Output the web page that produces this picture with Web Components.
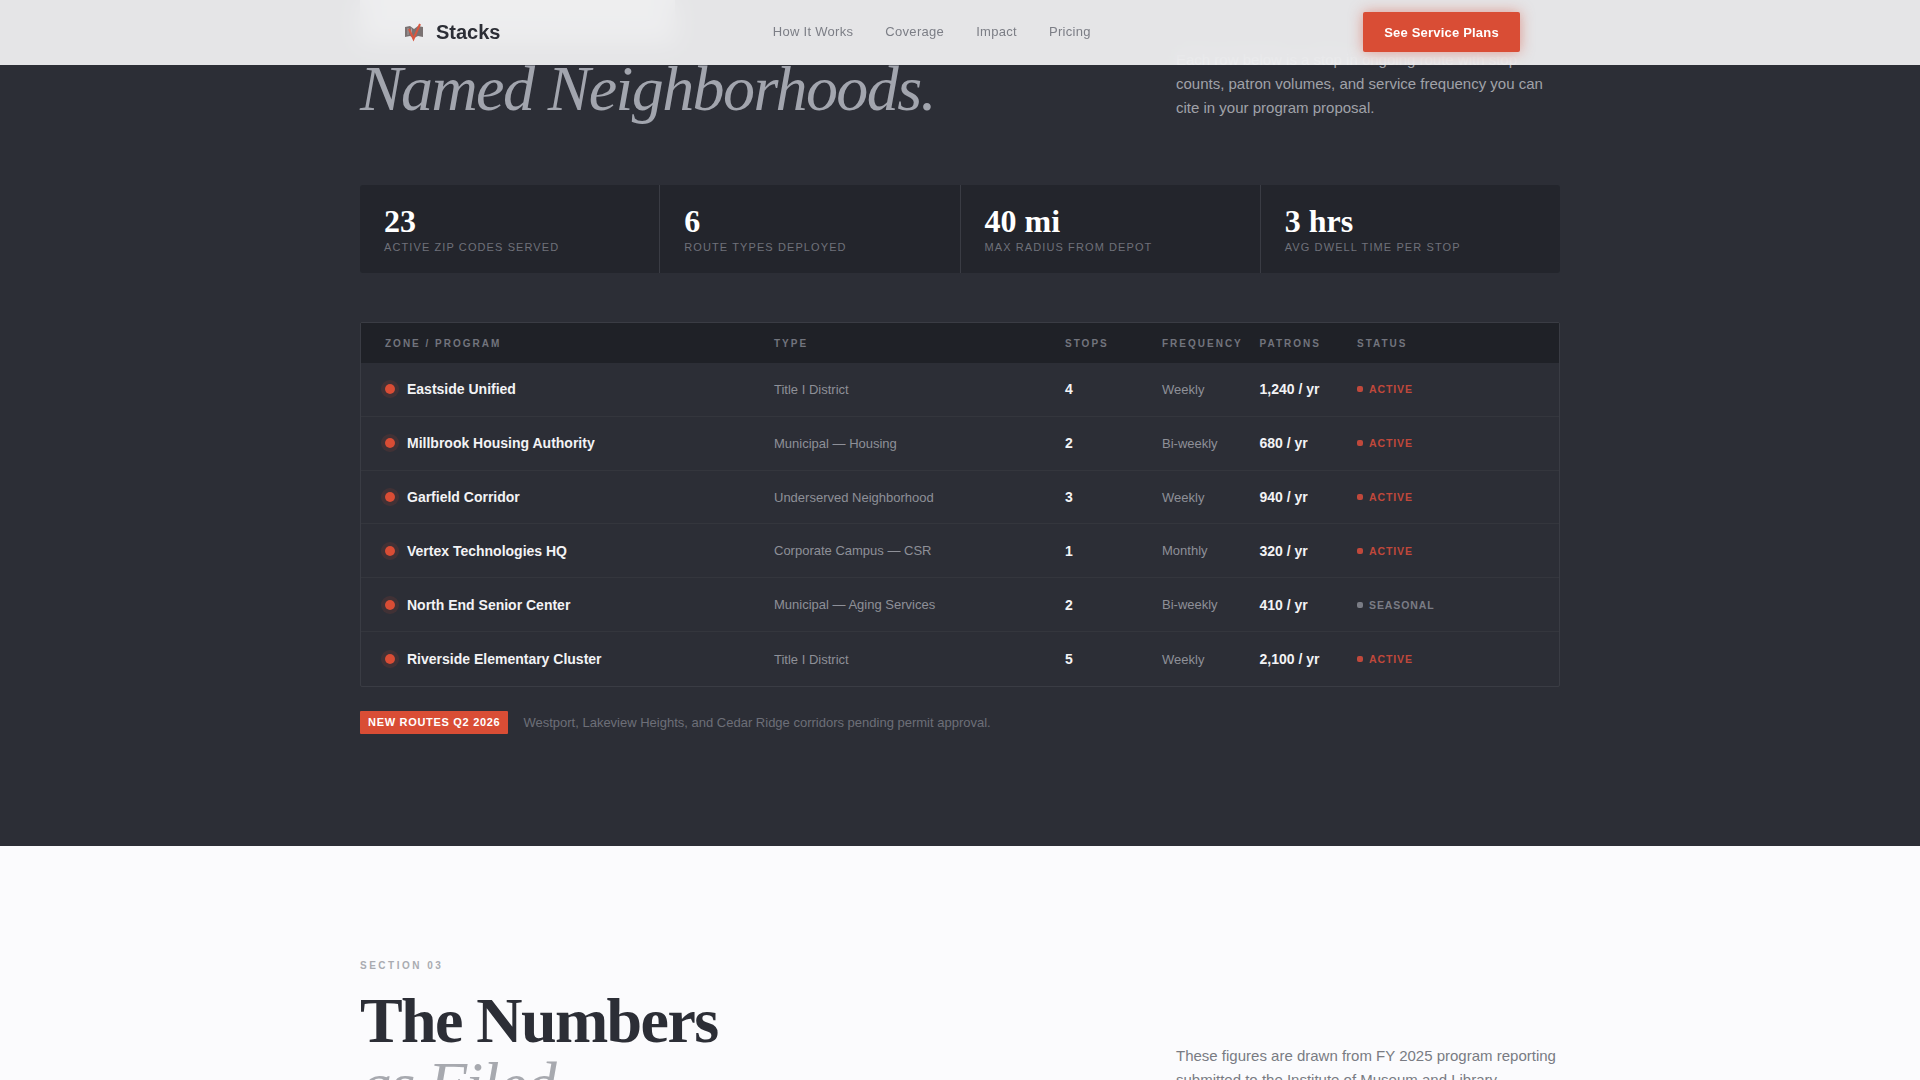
<!DOCTYPE html>
<html lang="en">
<head>
<meta charset="utf-8">
<title>Stacks</title>
<style>
  html, body { margin: 0; height: 1080px; overflow: hidden; background: #2c2e36; }
  body { font-family: "Liberation Sans", Arial, sans-serif; }
</style>
</head>
<body>
<site-nav></site-nav>

<page-section tone="dark" style="--shift: -16px; --bottom: 112px">
  <section-head tone="dark" style="--gap: 64px">
    <span slot="title" class="ghost"></span>
    <span slot="accent">Named Neighborhoods.</span>
    Each row below is a stop in ongoing route with stop counts, patron volumes, and service frequency you can cite in your program proposal.
  </section-head>

  <stat-strip>
    <stat-cell value="23" label="Active Zip Codes Served"></stat-cell>
    <stat-cell value="6" label="Route Types Deployed"></stat-cell>
    <stat-cell value="40 mi" label="Max Radius from Depot"></stat-cell>
    <stat-cell value="3 hrs" label="Avg Dwell Time per Stop"></stat-cell>
  </stat-strip>

  <zone-table>
    <zone-row name="Eastside Unified" type="Title I District" stops="4" freq="Weekly" patrons="1,240 / yr" status="Active"></zone-row>
    <zone-row name="Millbrook Housing Authority" type="Municipal — Housing" stops="2" freq="Bi-weekly" patrons="680 / yr" status="Active"></zone-row>
    <zone-row name="Garfield Corridor" type="Underserved Neighborhood" stops="3" freq="Weekly" patrons="940 / yr" status="Active"></zone-row>
    <zone-row name="Vertex Technologies HQ" type="Corporate Campus — CSR" stops="1" freq="Monthly" patrons="320 / yr" status="Active"></zone-row>
    <zone-row name="North End Senior Center" type="Municipal — Aging Services" stops="2" freq="Bi-weekly" patrons="410 / yr" status="Seasonal"></zone-row>
    <zone-row name="Riverside Elementary Cluster" type="Title I District" stops="5" freq="Weekly" patrons="2,100 / yr" status="Active"></zone-row>
  </zone-table>

  <route-note badge="New Routes Q2 2026">Westport, Lakeview Heights, and Cedar Ridge corridors pending permit approval.</route-note>
</page-section>

<page-section tone="light" style="--top: 114px; --bottom: 112px">
  <section-head tone="light" eyebrow="Section 03">
    <span slot="title">The Numbers</span>
    <span slot="accent">as Filed</span>
    These figures are drawn from FY 2025 program reporting submitted to the Institute of Museum and Library Services.
  </section-head>
</page-section>

<style>
  /* first heading line sits under the nav, only its glow comes through the blur */
  .ghost { display: block; width: 315px; height: 73.400px; background: linear-gradient(rgba(255,255,255,0.4), rgba(255,255,255,0.4)) 0 14px / 100% 45px no-repeat; }
</style>

<script>
class SiteNav extends HTMLElement {
  constructor() {
    super();
    this.attachShadow({ mode: 'open' });
    this.shadowRoot.innerHTML = `
      <style>
        :host {
          display: block;
          position: fixed;
          top: 0;
          left: 0;
          right: 0;
          z-index: 10;
          height: 65px;
          background: rgba(250,250,251,0.9);
          backdrop-filter: blur(12px);
        }
        nav {
          box-sizing: border-box;
          max-width: 1200px;
          height: 100%;
          margin: 0 auto;
          padding: 0 40px 1px 44px;
          display: flex;
          align-items: center;
          justify-content: space-between;
        }
        .logo {
          display: flex;
          align-items: center;
          gap: 12px;
          font-size: 20px;
          font-weight: 700;
          color: #2c2e36;
        }
        .logo svg { display: block; }
        ul {
          display: flex;
          gap: 32px;
          margin: 0 0 2px;
          padding: 0;
          list-style: none;
          font-size: 13px;
          letter-spacing: 0.3px;
          color: #7c7e86;
        }
        a.cta {
          box-sizing: border-box;
          width: 157px;
          height: 40px;
          display: flex;
          align-items: center;
          justify-content: center;
          background: #d94d35;
          border-radius: 2px;
          box-shadow: 0 0 14px rgba(220,76,53,0.5);
          color: #fff;
          font-size: 13px;
          font-weight: 700;
          letter-spacing: 0.2px;
        }
      </style>
      <nav>
        <div class="logo">
          <svg width="20" height="20" viewBox="0 0 20 20" fill="none">
            <path d="M1 5l5-1 4 3 4-3 5 1v10l-5-1-4 2-4-2-5 1z" fill="#7a7272"/>
            <path d="M4 6v7M7.500 6.500v7" stroke="#a89fa1" stroke-width="1"/>
            <path d="M5 7l4.500 10L16 2" stroke="#d9563f" stroke-width="2"/>
          </svg>
          <span>Stacks</span>
        </div>
        <ul>
          <li>How It Works</li>
          <li>Coverage</li>
          <li>Impact</li>
          <li>Pricing</li>
        </ul>
        <a class="cta">See Service Plans</a>
      </nav>
    `;
  }
}

class PageSection extends HTMLElement {
  constructor() {
    super();
    this.attachShadow({ mode: 'open' });
    this.shadowRoot.innerHTML = `
      <style>
        :host {
          display: flow-root;
          padding: var(--top, 0) 0 var(--bottom, 0);
          background: #2c2e36;
        }
        :host([tone="light"]) { background: #fbfbfd; }
        .wrap { width: 1200px; margin: var(--shift, 0) auto 0; }
      </style>
      <div class="wrap"><slot></slot></div>
    `;
  }
}

class SectionHead extends HTMLElement {
  constructor() {
    super();
    this.attachShadow({ mode: 'open' });
    const eyebrow = this.getAttribute('eyebrow');
    this.shadowRoot.innerHTML = `
      <style>
        :host {
          display: grid;
          grid-template-columns: 1fr 384px;
          align-items: end;
          margin-bottom: var(--gap, 0);
          color: #2c2e36;
        }
        .eyebrow {
          margin-bottom: 18px;
          font-size: 10px;
          font-weight: 700;
          letter-spacing: 2.500px;
          text-transform: uppercase;
          color: #a9abb1;
        }
        h2 {
          margin: 0;
          font: 700 64px/1 "Liberation Serif", "Times New Roman", serif;
          letter-spacing: -1.600px;
        }
        .accent {
          display: block;
          font-style: italic;
          font-weight: 400;
          color: #a7a9af;
        }
        p {
          margin: 0 0 1px;
          font-size: 15px;
          line-height: 24px;
          color: #797b83;
        }
        :host([tone="dark"]) h2 { color: #fff; }
        :host([tone="dark"]) .accent { color: #a2a5ae; }
        :host([tone="dark"]) p { color: #a0a2a9; }
      </style>
      <div>
        ${eyebrow ? `<div class="eyebrow">${eyebrow}</div>` : ''}
        <h2><slot name="title"></slot><span class="accent"><slot name="accent"></slot></span></h2>
      </div>
      <p><slot></slot></p>
    `;
  }
}

class StatStrip extends HTMLElement {
  constructor() {
    super();
    this.attachShadow({ mode: 'open' });
    this.shadowRoot.innerHTML = `
      <style>
        :host {
          display: grid;
          grid-template-columns: repeat(4, 1fr);
          gap: 1px;
          height: 88px;
          margin-bottom: 49px;
          background: rgba(255,255,255,0.07);
          border-radius: 2px;
          overflow: hidden;
        }
      </style>
      <slot></slot>
    `;
  }
}

class StatCell extends HTMLElement {
  constructor() {
    super();
    this.attachShadow({ mode: 'open' });
    this.shadowRoot.innerHTML = `
      <style>
        :host {
          display: block;
          box-sizing: border-box;
          padding: 18px 24px 0;
          background: #23252c;
        }
        .value {
          font: 700 32px/36px "Liberation Serif", "Times New Roman", serif;
          color: #fff;
        }
        .label {
          margin-top: 1px;
          font-size: 11px;
          line-height: 14px;
          letter-spacing: 1.100px;
          text-transform: uppercase;
          color: #6f717a;
        }
      </style>
      <div class="value">${this.getAttribute('value')}</div>
      <div class="label">${this.getAttribute('label')}</div>
    `;
  }
}

const ZONE_COLUMNS = '389px 291px 97px 97.500px 97.500px 1fr';

class ZoneTable extends HTMLElement {
  constructor() {
    super();
    this.attachShadow({ mode: 'open' });
    this.shadowRoot.innerHTML = `
      <style>
        :host {
          display: block;
          border: 1px solid rgba(255,255,255,0.07);
          border-radius: 2px;
        }
        header {
          display: grid;
          grid-template-columns: ${ZONE_COLUMNS};
          align-items: center;
          height: 39.400px;
          background: #1f2127;
          font-size: 10px;
          font-weight: 700;
          letter-spacing: 2px;
          text-transform: uppercase;
          color: #72747d;
        }
        header span { padding-left: 24px; }
      </style>
      <header>
        <span>Zone / Program</span>
        <span>Type</span>
        <span>Stops</span>
        <span>Frequency</span>
        <span>Patrons</span>
        <span>Status</span>
      </header>
      <slot></slot>
    `;
  }
}

class ZoneRow extends HTMLElement {
  constructor() {
    super();
    this.attachShadow({ mode: 'open' });
    const status = this.getAttribute('status');
    this.shadowRoot.innerHTML = `
      <style>
        :host {
          display: grid;
          grid-template-columns: ${ZONE_COLUMNS};
          align-items: center;
          height: 53.900px;
          box-sizing: border-box;
          border-bottom: 1px solid rgba(255,255,255,0.04);
          font-size: 13px;
          color: #8e9098;
        }
        :host(:last-child) { border-bottom: 0; }
        div.cell { padding-left: 24px; }
        div.name {
          display: flex;
          align-items: center;
          gap: 8px;
          padding-left: 20px;
          font-size: 14px;
          font-weight: 700;
          color: #f3f3f5;
        }
        .pin {
          flex: none;
          box-sizing: border-box;
          width: 18px;
          height: 18px;
          border-radius: 50%;
          border: 4px solid rgba(220,76,53,0.12);
          background: #d94d35;
          background-clip: padding-box;
        }
        .strong { font-size: 14px; font-weight: 700; color: #f3f3f5; }
        .status {
          display: flex;
          align-items: center;
          gap: 6px;
          font-size: 10.500px;
          font-weight: 700;
          letter-spacing: 0.900px;
          text-transform: uppercase;
          color: #c0483b;
        }
        .status i { width: 6px; height: 6px; border-radius: 2px; background: currentColor; }
        .status.seasonal { color: #7a7c85; }
      </style>
      <div class="cell name"><span class="pin"></span>${this.getAttribute('name')}</div>
      <div class="cell">${this.getAttribute('type')}</div>
      <div class="cell strong">${this.getAttribute('stops')}</div>
      <div class="cell">${this.getAttribute('freq')}</div>
      <div class="cell strong">${this.getAttribute('patrons')}</div>
      <div class="cell status ${status.toLowerCase()}"><i></i>${status}</div>
    `;
  }
}

class RouteNote extends HTMLElement {
  constructor() {
    super();
    this.attachShadow({ mode: 'open' });
    this.shadowRoot.innerHTML = `
      <style>
        :host {
          display: flex;
          align-items: center;
          gap: 15px;
          margin-top: 24.200px;
          font-size: 13px;
          color: #6d6f78;
        }
        .badge {
          padding: 0 8px;
          line-height: 23px;
          background: #d94d35;
          border-radius: 1px;
          color: #fff;
          font-size: 11px;
          font-weight: 700;
          letter-spacing: 0.700px;
          text-transform: uppercase;
        }
      </style>
      <span class="badge">${this.getAttribute('badge')}</span>
      <span><slot></slot></span>
    `;
  }
}

customElements.define('site-nav', SiteNav);
customElements.define('page-section', PageSection);
customElements.define('section-head', SectionHead);
customElements.define('stat-strip', StatStrip);
customElements.define('stat-cell', StatCell);
customElements.define('zone-table', ZoneTable);
customElements.define('zone-row', ZoneRow);
customElements.define('route-note', RouteNote);
</script>
</body>
</html>
